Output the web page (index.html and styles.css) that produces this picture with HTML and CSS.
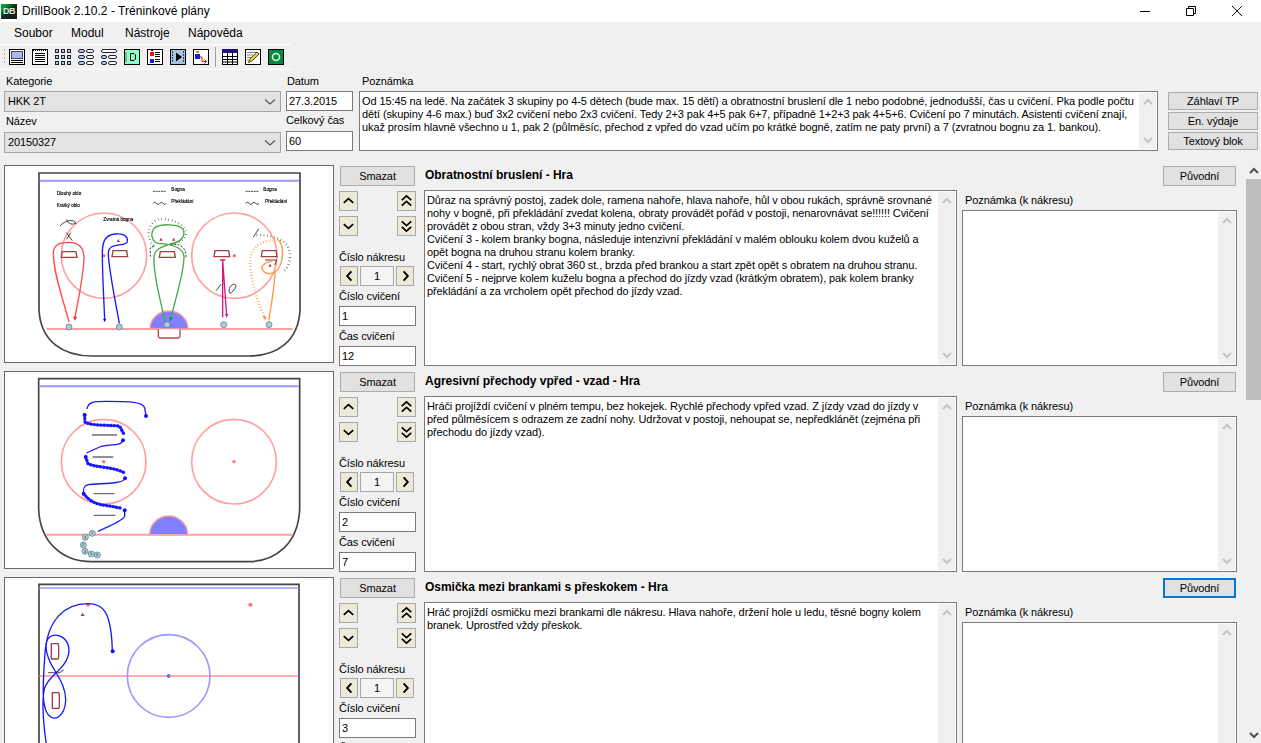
FILE: index.html
```html
<!DOCTYPE html>
<html lang="cs">
<head>
<meta charset="utf-8">
<title>DrillBook 2.10.2 - Tréninkové plány</title>
<link rel="stylesheet" href="styles.css">
</head>
<body>
<svg class="defs" width="0" height="0" aria-hidden="true">
  <symbol id="up" viewBox="0 0 18 18"><path d="M4 11 9 6.5 14 11" fill="none" stroke="#000" stroke-width="1.8"/></symbol>
  <symbol id="down" viewBox="0 0 18 18"><path d="M4 7 9 11.5 14 7" fill="none" stroke="#000" stroke-width="1.8"/></symbol>
  <symbol id="up2" viewBox="0 0 18 18"><path d="M4 8 9 3.5 14 8M4 14 9 9.500 14 14" fill="none" stroke="#000" stroke-width="1.8"/></symbol>
  <symbol id="down2" viewBox="0 0 18 18"><path d="M4 4 9 8.500 14 4M4 10 9 14.500 14 10" fill="none" stroke="#000" stroke-width="1.8"/></symbol>
  <symbol id="left" viewBox="0 0 18 18"><path d="M11 4 6.500 9 11 14" fill="none" stroke="#000" stroke-width="2"/></symbol>
  <symbol id="right" viewBox="0 0 18 18"><path d="M7 4 11.500 9 7 14" fill="none" stroke="#000" stroke-width="2"/></symbol>
  <symbol id="sup" viewBox="0 0 12 12"><path d="M2 8 6 4 10 8" fill="none" stroke="#c4c4c4" stroke-width="2"/></symbol>
  <symbol id="sdown" viewBox="0 0 12 12"><path d="M2 4 6 8 10 4" fill="none" stroke="#c4c4c4" stroke-width="2"/></symbol>
  <symbol id="bup" viewBox="0 0 12 12"><path d="M2 8 6 4 10 8" fill="none" stroke="#505050" stroke-width="2"/></symbol>
  <symbol id="bdown" viewBox="0 0 12 12"><path d="M2 4 6 8 10 4" fill="none" stroke="#505050" stroke-width="2"/></symbol>
  <symbol id="sel" viewBox="0 0 12 8"><path d="M1 1.500 6 6 11 1.500" fill="none" stroke="#555" stroke-width="1.200"/></symbol>
</svg>

<header class="titlebar">
  <div class="logo">DB</div>
  <div class="apptitle">DrillBook 2.10.2 - Tréninkové plány</div>
  <div class="winctl">
    <svg width="10" height="10" viewBox="0 0 10 10"><path d="M0 5.500H10" stroke="#000"/></svg>
    <svg width="10" height="10" viewBox="0 0 10 10"><path d="M.5 2.500H7.500V9.500H.5ZM2.500 2.500V.5H9.500V7.500H7.500" fill="none" stroke="#000"/></svg>
    <svg width="10" height="10" viewBox="0 0 10 10"><path d="M0 0 10 10M10 0 0 10" stroke="#000" stroke-width=".9"/></svg>
  </div>
</header>

<nav class="menubar">
  <span class="m1">Soubor</span><span class="m2">Modul</span><span class="m3">Nástroje</span><span class="m4">Nápověda</span>
</nav>

<div class="toolbar">
  <div class="grip"></div>
  <svg class="ti" viewBox="0 0 16 16"><rect x=".5" y=".5" width="15" height="15" fill="#fff" stroke="#000"/><rect x="2.500" y="2.500" width="11" height="7" fill="#a9b8f0" stroke="#446"/><path d="M2 11.500H14M2 13.500H14" stroke="#000"/></svg>
  <svg class="ti" viewBox="0 0 16 16"><rect x=".5" y=".5" width="15" height="15" fill="#fff" stroke="#000"/><path d="M3 4.500H13M3 6.500H13M3 8.500H13M3 10.500H13M3 12.500H13" stroke="#000"/><path d="M1 1.500H15" stroke="#000" stroke-dasharray="1 1"/></svg>
  <svg class="ti" viewBox="0 0 16 16"><g fill="#b8c8f0" stroke="#223"><rect x=".5" y=".5" width="3" height="3"/><rect x="6.500" y=".5" width="3" height="3"/><rect x="12.500" y=".5" width="3" height="3"/><rect x=".5" y="6.500" width="3" height="3"/><rect x="6.500" y="6.500" width="3" height="3"/><rect x="12.500" y="6.500" width="3" height="3"/><rect x=".5" y="12.500" width="3" height="3"/><rect x="6.500" y="12.500" width="3" height="3"/><rect x="12.500" y="12.500" width="3" height="3"/></g></svg>
  <svg class="ti" viewBox="0 0 16 16"><g stroke="#223"><rect x=".5" y=".5" width="6" height="3" rx="1.500" fill="#b8c8f0"/><rect x="8.500" y=".5" width="7" height="3" rx="1.500" fill="#fff"/><rect x=".5" y="6.500" width="6" height="3" rx="1.500" fill="#b8c8f0"/><rect x="8.500" y="6.500" width="7" height="3" rx="1.500" fill="#fff"/><rect x=".5" y="12.500" width="6" height="3" rx="1.500" fill="#b8c8f0"/><rect x="8.500" y="12.500" width="7" height="3" rx="1.500" fill="#fff"/></g></svg>
  <svg class="ti" viewBox="0 0 16 16"><g stroke="#223"><rect x=".5" y=".5" width="15" height="3" rx="1.500" fill="#fff"/><rect x=".5" y="6.500" width="5" height="3" rx="1.500" fill="#b8c8f0"/><rect x="7.500" y="6.500" width="8" height="3" rx="1.500" fill="#fff"/><rect x=".5" y="12.500" width="5" height="3" rx="1.500" fill="#b8c8f0"/><rect x="7.500" y="12.500" width="8" height="3" rx="1.500" fill="#fff"/></g></svg>
  <svg class="ti" viewBox="0 0 16 16"><rect x=".5" y=".5" width="15" height="15" fill="#8fffc8" stroke="#000"/><path d="M6.500 4.500H10L11.500 6V10L10 11.500H6.500Z" fill="none" stroke="#000"/><path d="M2 3.500V12.500" stroke="#000" stroke-dasharray="1 1"/></svg>
  <svg class="ti" viewBox="0 0 16 16"><rect x=".5" y=".5" width="15" height="15" fill="#fff" stroke="#000"/><rect x="3" y="3" width="4" height="4" fill="#f01010"/><rect x="3" y="10" width="4" height="4" fill="#1020e0"/><path d="M4 1.500H6M8 3.500H13M8 5.500H13M8 7.500H13M8 10.500H13M8 12.500H13" stroke="#000"/></svg>
  <svg class="ti" viewBox="0 0 16 16"><rect x=".5" y=".5" width="15" height="15" fill="#a4c4e4" stroke="#000"/><path d="M6 3.500 12 8 6 12.500Z" fill="#000"/><path d="M2.500 2V14" stroke="#335" stroke-dasharray="2 1"/><path d="M13.500 2V14" stroke="#335" stroke-dasharray="2 1"/></svg>
  <svg class="ti" viewBox="0 0 16 16"><rect x=".5" y=".5" width="15" height="15" fill="#fff" stroke="#000"/><rect x="3" y="2" width="3" height="2" fill="#f08020"/><rect x="2" y="5" width="5" height="5" fill="#1020e0"/><path d="M7 8H9V12.500H13.500M11.500 10.500 13.500 12.500 11.500 14.500" fill="none" stroke="#f01010"/></svg>
  <div class="tsep"></div>
  <svg class="ti" viewBox="0 0 16 16"><rect x=".5" y=".5" width="15" height="15" fill="#fff" stroke="#000"/><rect x="0" y="0" width="16" height="4" fill="#20107a"/><path d="M1 7.500H15M1 10.500H15M1 13H15M5.500 4V15M10.500 4V15" stroke="#000"/></svg>
  <svg class="ti" viewBox="0 0 16 16"><rect x=".5" y=".5" width="15" height="15" fill="#fff" stroke="#000"/><path d="M2 3.500H11M2 6H8M2 8.500H6M2 11H4" stroke="#888"/><path d="M3.500 13.500 5 10 12 3 14 5 7 12Z" fill="#f0d020" stroke="#222" stroke-width=".8"/></svg>
  <svg class="ti" viewBox="0 0 16 16"><rect x=".5" y=".5" width="15" height="15" fill="#008c3c" stroke="#000"/><circle cx="8" cy="8" r="3.500" fill="none" stroke="#d8f0e0" stroke-width="1.600"/></svg>
</div>

<section class="form">
  <div class="fcol c-kat">
    <label class="flabel">Kategorie</label>
    <div class="select">HKK 2T<svg class="caret"><use href="#sel"/></svg></div>
    <label class="flabel second">Název</label>
    <div class="select">20150327<svg class="caret"><use href="#sel"/></svg></div>
  </div>
  <div class="fcol c-dat">
    <label class="flabel">Datum</label>
    <div class="input">27.3.2015</div>
    <label class="flabel second">Celkový čas</label>
    <div class="input">60</div>
  </div>
  <div class="fcol c-note">
    <label class="flabel">Poznámka</label>
    <div class="area note-main">
      <div class="area-text">Od 15:45 na ledě. Na začátek 3 skupiny po 4-5 dětech (bude max. 15 dětí) a obratnostní bruslení dle 1 nebo podobné, jednodušší, čas u cvičení. Pka podle počtu<br>dětí (skupiny 4-6 max.) buď 3x2 cvičení nebo 2x3 cvičení. Tedy 2+3 pak 4+5 pak 6+7, případně 1+2+3 pak 4+5+6. Cvičení po 7 minutách. Asistenti cvičení znají,<br>ukaž prosím hlavně všechno u 1, pak 2 (půlměsíc, přechod z vpřed do vzad učím po krátké bogně, zatím ne paty první) a 7 (zvratnou bognu za 1. bankou).</div>
      <div class="vbar"><svg class="sa"><use href="#sup"/></svg><svg class="sa"><use href="#sdown"/></svg></div>
    </div>
  </div>
  <div class="fcol c-btn">
    <button class="btn side">Záhlaví TP</button>
    <button class="btn side">En. výdaje</button>
    <button class="btn side">Textový blok</button>
  </div>
</section>

<main class="workspace">
  <div class="rows">

    <article class="row">
      <div class="drawing">
        <svg class="rink" viewBox="15 18 984 588">
          <path class="wall" d="M117 39H900V450C895 545 830 588 745 588H275C190 588 122 545 117 450Z"/>
          <path class="blueline" d="M119 62H897"/>
          <path class="redline" d="M140 507H878"/>
          <path class="crease" d="M450 507A57 54 0 0 1 564 507Z"/>
          <circle class="face" cx="312" cy="287" r="128"/><circle class="face" cx="703" cy="287" r="128"/>
          <circle class="spot" cx="312" cy="287" r="5"/><circle class="spot" cx="703" cy="287" r="5"/>
          <text class="tiny" x="170" y="106">Dlouhý oblo</text><text class="tiny" x="170" y="142">Krátký oblo</text><text class="tiny" x="310" y="183">Zvratná bogna</text>
          <text class="tiny" x="514" y="94">Bogna</text><text class="tiny" x="514" y="129">Překládání</text><text class="tiny" x="790" y="94">Bogna</text><text class="tiny" x="795" y="129">Překládání</text>
          <path class="ink thin" d="M459 94H498M737 94H776" stroke-dasharray="6 2"/>
          <path class="ink thin" d="M459 130q5-7 10 0t10 0 10 0 10 0M737 130q5-7 10 0t10 0 10 0 10 0"/>
          <path class="goal" d="M184 292 187 275H228L231 292Z"/><path class="goal" d="M336 290 339 272H380L383 290Z"/><path class="goal" d="M478 292 481 275H523L526 292Z"/><path class="goal" d="M642 290 645 272H686L689 290Z"/><path class="goal" d="M784 290 787 272H828L831 290Z"/>
          <path class="goal2" d="M475 508V530L480 534H535L540 530V508"/>
          <path class="cone" d="M355 237 350 246H360ZM483 233 478 242H488ZM521 233 516 242H526ZM810 311 805 320H815Z"/>
          <path class="squig" d="M460 258C440 235 440 195 470 180 505 170 560 190 558 225 550 245 520 255 510 252"/>
          <path class="ink thin" d="M463 258 450 265 452 292M510 254C530 250 560 255 558 292" stroke-dasharray="7 4"/>
          <path class="squig" d="M770 225C820 225 870 240 870 285 870 310 860 330 848 335"/>
          <path class="ink thin" d="M180 198C195 180 225 175 228 192M200 178C205 195 222 195 226 188M199 218 217 242M212 218 200 238M795 300H830L824 315"/>
          <path class="ink thin" d="M648 392 664 372M690 400C680 385 700 365 708 376 706 390 695 398 690 400M760 232 776 206"/>
          <path class="path red" d="M207 486C190 420 160 340 160 280 160 250 185 247 207 247 235 247 252 260 252 295 250 350 235 420 224 476"/>
          <path class="path blue" d="M358 490C345 420 325 320 325 280 325 245 375 262 382 245 385 225 365 220 345 222 315 225 307 245 307 280 307 350 312 420 314 482"/>
          <path class="path green" d="M497 490C480 420 460 340 462 290 465 260 500 258 510 252 550 245 555 225 550 210 540 190 480 190 462 205 450 220 455 245 475 250 510 252 550 260 552 290 552 340 525 420 512 478"/>
          <path class="path pink" d="M668 472V300M660 300H676M668 300 680 468"/>
          <path class="path orange" d="M806 482C815 430 825 370 825 332 820 345 790 345 785 322 790 305 815 305 822 300"/>
          <path class="path orange" d="M835 240C855 260 850 320 825 335"/>
          <path class="wave orange" d="M795 476C770 420 750 350 750 300 755 255 790 240 835 240"/>
          <path class="head-red" d="M219 470H231L225 482Z"/><path class="head-blue" d="M309 476H319L314 487Z"/><path class="head-green" d="M506 472H518L512 484Z"/><path class="head-pink" d="M675 462H685L680 473Z"/><path class="head-orange" d="M788 468 799 470 796 480Z"/>
          <g class="players"><circle cx="207" cy="501" r="9"/><circle cx="358" cy="501" r="9"/><circle cx="501" cy="494" r="9"/><circle cx="671" cy="494" r="9"/><circle cx="807" cy="494" r="9"/></g>
        </svg>
      </div>
      <div class="ctrl">
        <button class="btn smazat">Smazat</button>
        <div class="arrows"><button class="abtn"><svg><use href="#up"/></svg></button><button class="abtn"><svg><use href="#up2"/></svg></button></div>
        <div class="arrows"><button class="abtn"><svg><use href="#down"/></svg></button><button class="abtn"><svg><use href="#down2"/></svg></button></div>
        <label class="clabel first">Číslo nákresu</label>
        <div class="stepper"><button class="abtn"><svg><use href="#left"/></svg></button><div class="stepval">1</div><button class="abtn"><svg><use href="#right"/></svg></button></div>
        <label class="clabel">Číslo cvičení</label>
        <div class="input wide">1</div>
        <label class="clabel">Čas cvičení</label>
        <div class="input wide">12</div>
      </div>
      <div class="body">
        <h2 class="extitle">Obratnostní bruslení - Hra</h2>
        <div class="area ex">
          <div class="area-text">Důraz na správný postoj, zadek dole, ramena nahoře, hlava nahoře, hůl v obou rukách, správně srovnané<br>nohy v bogně, při překládání zvedat kolena, obraty provádět pořád v postoji, nenarovnávat se!!!!!! Cvičení<br>provádět z obou stran, vždy 3+3 minuty jedno cvičení.<br>Cvičení 3 - kolem branky bogna, následuje intenzivní překládání v malém oblouku kolem dvou kuželů a<br>opět bogna na druhou stranu kolem branky.<br>Cvičení 4 - start, rychlý obrat 360 st., brzda před brankou a start zpět opět s obratem na druhou stranu.<br>Cvičení 5 - nejprve kolem kuželu bogna a přechod do jízdy vzad (krátkým obratem), pak kolem branky<br>překládání a za vrcholem opět přechod do jízdy vzad.</div>
          <div class="vbar"><svg class="sa"><use href="#sup"/></svg><svg class="sa"><use href="#sdown"/></svg></div>
        </div>
      </div>
      <div class="side-note">
        <button class="btn orig">Původní</button>
        <label class="nlabel">Poznámka (k nákresu)</label>
        <div class="area nt"><div class="area-text"></div><div class="vbar"><svg class="sa"><use href="#sup"/></svg><svg class="sa"><use href="#sdown"/></svg></div></div>
      </div>
    </article>

    <article class="row">
      <div class="drawing">
        <svg class="rink" viewBox="16 7 984 588">
          <path class="wall" d="M117 27H900V420C895 520 830 576 745 576H275C190 576 122 520 117 420Z"/>
          <path class="blueline" d="M119 50H897"/>
          <path class="redline" d="M140 495H878"/>
          <path class="crease" d="M450 495A57 56 0 0 1 564 495Z"/>
          <circle class="face" cx="312" cy="276" r="127"/><circle class="face" cx="703" cy="276" r="127"/>
          <circle class="spot" cx="312" cy="276" r="5"/><circle class="spot" cx="703" cy="276" r="5"/>
          <path class="stick" d="M277 196H352M282 372H344M282 437H347"/><path class="stick dark" d="M279 262H341"/>
          <path class="path blue" d="M262 118C265 95 285 95 320 95 380 95 430 95 435 115L439 138"/>
          <path class="path blue" d="M370 212C365 232 320 222 300 232L260 250"/>
          <path class="path blue" d="M376 326C370 345 300 340 265 345 250 350 250 360 252 372"/>
          <path class="path blue" d="M375 422V440C370 452 330 470 295 485"/>
          <path class="path blue" d="M255 136 256 158C280 170 340 165 360 170L372 192"/>
          <path class="path blue" d="M258 262 265 282C290 295 340 290 375 310"/>
          <path class="path blue" d="M252 372C270 395 290 405 325 408L362 415"/>
          <path class="beads" d="M255 136 256 158C280 170 340 165 360 170L372 192"/>
          <path class="beads" d="M258 262 265 282C290 295 340 290 375 310"/>
          <path class="beads" d="M252 372C270 395 290 405 325 408L362 415"/>
          <g class="bdots"><circle cx="439" cy="139" r="6"/><circle cx="255" cy="136" r="6"/><circle cx="370" cy="212" r="6"/><circle cx="258" cy="262" r="6"/><circle cx="376" cy="326" r="6"/><circle cx="252" cy="372" r="6"/><circle cx="375" cy="422" r="6"/></g>
          <g class="players"><circle cx="278" cy="491" r="9"/><circle cx="257" cy="503" r="9"/><circle cx="251" cy="526" r="9"/><circle cx="256" cy="545" r="9"/><circle cx="275" cy="553" r="9"/><circle cx="293" cy="556" r="9"/></g>
          <g class="pnum"><text x="278" y="495">7</text><text x="257" y="507">3</text><text x="251" y="530">2</text><text x="256" y="549">4</text><text x="275" y="557">5</text><text x="293" y="560">6</text></g>
        </svg>
      </div>
      <div class="ctrl">
        <button class="btn smazat">Smazat</button>
        <div class="arrows"><button class="abtn"><svg><use href="#up"/></svg></button><button class="abtn"><svg><use href="#up2"/></svg></button></div>
        <div class="arrows"><button class="abtn"><svg><use href="#down"/></svg></button><button class="abtn"><svg><use href="#down2"/></svg></button></div>
        <label class="clabel first">Číslo nákresu</label>
        <div class="stepper"><button class="abtn"><svg><use href="#left"/></svg></button><div class="stepval">1</div><button class="abtn"><svg><use href="#right"/></svg></button></div>
        <label class="clabel">Číslo cvičení</label>
        <div class="input wide">2</div>
        <label class="clabel">Čas cvičení</label>
        <div class="input wide">7</div>
      </div>
      <div class="body">
        <h2 class="extitle">Agresivní přechody vpřed - vzad - Hra</h2>
        <div class="area ex">
          <div class="area-text">Hráči projíždí cvičení v plném tempu, bez hokejek. Rychlé přechody vpřed vzad. Z jízdy vzad do jízdy v<br>před půlměsícem s odrazem ze zadní nohy. Udržovat v postoji, nehoupat se, nepředklánět (zejména při<br>přechodu do jízdy vzad).</div>
          <div class="vbar"><svg class="sa"><use href="#sup"/></svg><svg class="sa"><use href="#sdown"/></svg></div>
        </div>
      </div>
      <div class="side-note">
        <button class="btn orig">Původní</button>
        <label class="nlabel">Poznámka (k nákresu)</label>
        <div class="area nt"><div class="area-text"></div><div class="vbar"><svg class="sa"><use href="#sup"/></svg><svg class="sa"><use href="#sdown"/></svg></div></div>
      </div>
    </article>

    <article class="row">
      <div class="drawing">
        <svg class="rink" viewBox="16 11 984 588">
          <path class="wall" d="M118 30H898V590H118Z"/>
          <path class="blueline thinb" d="M119 41H897"/>
          <path class="redline thinr" d="M119 305H897"/>
          <circle class="face bluec" cx="507" cy="305" r="124"/>
          <circle class="spot" cx="265" cy="91" r="6"/><circle class="spot" cx="752" cy="91" r="6"/>
          <circle class="spot bluedot" cx="507" cy="305" r="6"/>
          <path class="cone" d="M249 115 243 125H255Z"/>
          <path class="goal" d="M155 208V254H175L177 250V214L175 208Z"/>
          <path class="goal" d="M158 355V402H177L179 398V361L177 355Z"/>
          <path class="stick" d="M145 295H180L192 286"/>
          <path class="path blue" d="M140 510C130 440 125 380 135 340 150 300 205 280 208 230 208 195 180 175 155 185 135 195 135 225 150 260 165 295 200 330 198 380 195 425 165 445 145 420 125 395 130 330 135 250 140 130 200 88 265 88 310 88 335 110 338 230"/>
          <g class="bdots"><circle cx="339" cy="231" r="6"/></g>
        </svg>
      </div>
      <div class="ctrl">
        <button class="btn smazat">Smazat</button>
        <div class="arrows"><button class="abtn"><svg><use href="#up"/></svg></button><button class="abtn"><svg><use href="#up2"/></svg></button></div>
        <div class="arrows"><button class="abtn"><svg><use href="#down"/></svg></button><button class="abtn"><svg><use href="#down2"/></svg></button></div>
        <label class="clabel first">Číslo nákresu</label>
        <div class="stepper"><button class="abtn"><svg><use href="#left"/></svg></button><div class="stepval">1</div><button class="abtn"><svg><use href="#right"/></svg></button></div>
        <label class="clabel">Číslo cvičení</label>
        <div class="input wide">3</div>
        <label class="clabel">Čas cvičení</label>
        <div class="input wide">5</div>
      </div>
      <div class="body">
        <h2 class="extitle">Osmička mezi brankami s přeskokem - Hra</h2>
        <div class="area ex">
          <div class="area-text">Hráč projíždí osmičku mezi brankami dle nákresu. Hlava nahoře, držení hole u ledu, těsné bogny kolem<br>branek. Uprostřed vždy přeskok.</div>
          <div class="vbar"><svg class="sa"><use href="#sup"/></svg><svg class="sa"><use href="#sdown"/></svg></div>
        </div>
      </div>
      <div class="side-note">
        <button class="btn orig focus">Původní</button>
        <label class="nlabel">Poznámka (k nákresu)</label>
        <div class="area nt"><div class="area-text"></div><div class="vbar"><svg class="sa"><use href="#sup"/></svg><svg class="sa"><use href="#sdown"/></svg></div></div>
      </div>
    </article>

  </div>
  <div class="scrollbar">
    <div class="sb-arrow"><svg class="sb-i"><use href="#bup"/></svg></div>
    <div class="thumb"></div>
    <div class="sb-fill"></div>
    <div class="sb-arrow"><svg class="sb-i"><use href="#bdown"/></svg></div>
  </div>
</main>
</body>
</html>
```

FILE: styles.css
```css
* { box-sizing: border-box; }
html, body { margin: 0; padding: 0; height: 743px; overflow: hidden; }
body { width: 1261px; background: #f0f0f0; font: 11px/13px "Liberation Sans", Arial, sans-serif; letter-spacing: -.1px; color: #000; display: flex; flex-direction: column; }
.defs { position: absolute; }
button { font: inherit; letter-spacing: inherit; color: #000; padding: 0; cursor: default; }
label { display: block; }

/* title bar */
.titlebar { flex: 0 0 22px; background: #fff; display: flex; align-items: center; padding-left: 1px; }
.logo { width: 16px; height: 15px; margin-top: 1px; background: linear-gradient(135deg, #0a9a30 0 20%, #10281a 50%, #1c1c1c 100%); color: #dfe8df; font-size: 9px; line-height: 15px; font-weight: bold; text-align: center; letter-spacing: -.5px; }
.apptitle { margin-left: 5px; font-size: 12px; letter-spacing: .05px; }
.winctl { margin-left: auto; display: flex; gap: 36px; padding-right: 19px; }
.winctl svg { display: block; }

/* menu */
.menubar { flex: 0 0 22px; display: flex; align-items: center; font-size: 12px; letter-spacing: 0; }
.menubar span { display: block; }
.m1 { margin-left: 14px; width: 57px; }
.m2 { width: 54px; }
.m3 { width: 63px; }

/* toolbar */
.toolbar { flex: none; height: 26px; width: 291px; border-top: 1px solid #fff; border-bottom: 1px solid #fff; display: flex; align-items: center; padding-left: 4px; }
.grip { width: 2px; height: 16px; margin-right: 4px; background: repeating-linear-gradient(#b0b0b0 0 2px, transparent 2px 4px); }
.ti { width: 16px; height: 16px; margin-right: 7px; flex: none; }
.tsep { width: 1px; height: 20px; background: #a0a0a0; margin: 0 6px 0 -1px; }

/* form */
.form { flex: 0 0 85px; display: flex; padding-left: 4px; }
.fcol { display: flex; flex-direction: column; }
.c-kat { width: 277px; }
.c-dat { width: 67px; margin-left: 5px; }
.c-note { width: 799px; margin-left: 6px; }
.c-btn { width: 90px; margin-left: 10px; padding-top: 22px; gap: 2px; }
.flabel { height: 21px; padding: 5px 0 0 2px; line-height: 13px; }
.flabel.second { height: 20px; padding-top: 3px; }
.c-dat .flabel { padding-left: 1px; }
.c-dat .flabel.second { padding-left: 0; }
.c-note .flabel { padding-left: 3px; }
.select { height: 21px; background: #e3e3e3; border: 1px solid #a6a6a6; padding-left: 3px; line-height: 19px; position: relative; }
.caret { position: absolute; right: 4px; top: 6px; width: 12px; height: 8px; }
.input { height: 20px; background: #fff; border: 1px solid #7a7a7a; padding-left: 2px; line-height: 18px; }
.input.wide { width: 77px; }
.area { background: #fff; border: 1px solid #7a7a7a; display: flex; overflow: hidden; }
.area-text { flex: 1; padding: 3px 0 0 2px; white-space: nowrap; overflow: hidden; }
.note-main { height: 60px; }
.vbar { flex: 0 0 17px; margin: 1px 1px 1px 0; background: #f0f0f0; display: flex; flex-direction: column; justify-content: space-between; align-items: center; padding: 3px 0; }
.sa { width: 12px; height: 12px; display: block; }
.btn { background: #e1e1e1; border: 1px solid #adadad; display: block; text-align: center; }
.side { height: 18px; line-height: 16px; width: 90px; }

/* rows */
.workspace { flex: 1; min-height: 0; display: flex; overflow: hidden; }
.rows { flex: none; width: 1246px; padding: 10px 0 0 4px; display: flex; flex-direction: column; gap: 5px; }
.row { flex: none; height: 201px; display: flex; }
.drawing { flex: none; width: 330px; height: 198px; background: #fff; border: 1px solid #6a6a6a; }
.rink { display: block; width: 328px; height: 196px; filter: blur(.3px); fill: none; }
.ctrl { flex: none; width: 77px; margin-left: 5px; }
.smazat { width: 75px; height: 20px; margin: 1px 0 5px 1px; }
.arrows { display: flex; justify-content: space-between; height: 20px; margin-bottom: 5px; }
.abtn { width: 19px; height: 20px; background: #ece9d8; border: 1px solid #a8a8a8; display: block; flex: none; }
.abtn svg { width: 17px; height: 18px; display: block; }
.clabel { height: 20px; padding-top: 4px; }
.clabel.first { margin-top: 10px; padding-top: 5px; }
.stepper { display: flex; height: 20px; margin-left: 1px; width: 75px; gap: 2px; }
.stepper .abtn { width: 18px; }
.stepval { width: 34px; border: 1px solid #a8a8a8; background: #f4f4f4; text-align: center; line-height: 18px; }
.body { flex: none; width: 533px; margin-left: 8px; display: flex; flex-direction: column; }
.extitle { margin: 0; height: 25px; padding: 3px 0 0 1px; font-size: 12px; line-height: 14px; font-weight: bold; letter-spacing: -.03px; }
.ex { height: 176px; }
.side-note { flex: none; width: 275px; margin-left: 5px; display: flex; flex-direction: column; }
.orig { width: 73px; height: 20px; margin: 1px 0 0 201px; }
.focus { border: 2px solid #0078d7; }
.nlabel { height: 24px; padding: 8px 0 0 3px; }
.nt { height: 156px; }

/* vertical scrollbar */
.scrollbar { flex: none; width: 15px; margin-top: 8px; display: flex; flex-direction: column; background: #f0f0f0; }
.sb-arrow { flex: 0 0 16px; display: flex; align-items: center; justify-content: center; }
.sb-i { width: 12px; height: 12px; }
.thumb { flex: 0 0 221px; background: #bdbdbd; }
.sb-fill { flex: 1; }

/* rink drawing */
.wall { fill: #fff; stroke: #444; stroke-width: 5; }
.blueline { stroke: #9a9aff; stroke-width: 6; }
.thinb { stroke-width: 5; }
.redline { stroke: #ffa0a0; stroke-width: 6; }
.thinr { stroke: #ff9090; stroke-width: 5; }
.crease { fill: #8080ff; stroke: #ff9c9c; stroke-width: 4; }
.face { fill: none; stroke: #ffa0a0; stroke-width: 5; }
.bluec { stroke: #9a9aff; }
.spot { fill: #ff7070; }
.bluedot { fill: #7070f0; }
.goal { fill: #fff; stroke: #a04040; stroke-width: 4; }
.goal2 { fill: #fff; stroke: #a85050; stroke-width: 4; }
.cone { fill: #a04040; }
.tiny { font: 14px "Liberation Sans", Arial, sans-serif; letter-spacing: 0; fill: #000; stroke: #000; stroke-width: .4; }
.ink { fill: none; stroke: #222; stroke-width: 3.500; }
.thin { stroke-width: 2.500; }
.squig { fill: none; stroke: #333; stroke-width: 7; stroke-dasharray: 1.500 9; stroke-linecap: butt; }
.path { fill: none; stroke-width: 4; }
.red { stroke: #ff4848; }
.blue { stroke: #1818ff; }
.green { stroke: #48a848; }
.pink { stroke: #d81880; }
.orange { stroke: #ff9640; }
.wave { fill: none; stroke-width: 8; stroke-dasharray: 2 7; stroke-linecap: butt; }
.head-red { fill: #ff2020; }
.head-blue { fill: #1010ff; }
.head-green { fill: #208040; }
.head-pink { fill: #d81880; }
.head-orange { fill: #ff8020; }
.players circle { fill: #a8d0dc; stroke: #708088; stroke-width: 2.500; }
.pnum text { font: 11px "Liberation Sans", Arial, sans-serif; letter-spacing: 0; fill: #223; text-anchor: middle; }
.stick { fill: none; stroke: #707070; stroke-width: 4; }
.stick.dark { stroke: #222; stroke-width: 3; }
.beads { fill: none; stroke: #1818ff; stroke-width: 10; stroke-dasharray: 1 9; stroke-linecap: round; }
.bdots circle { fill: #1010ff; }
```
